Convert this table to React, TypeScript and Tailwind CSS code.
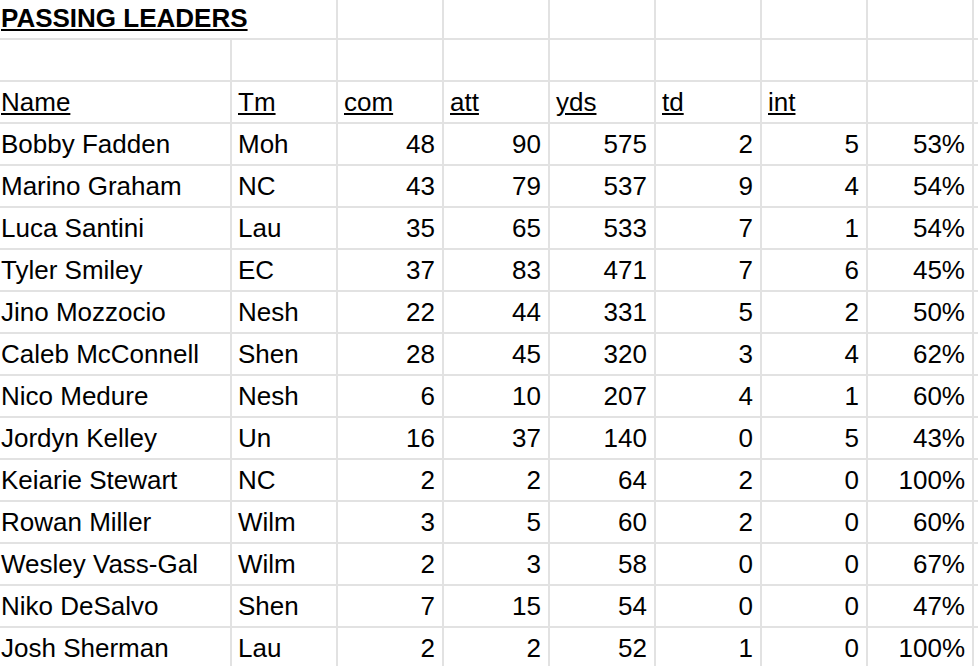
import React from 'react';

type Row = [string, string, number, number, number, number, number, string];

const rows: Row[] = [
  ['Bobby Fadden', 'Moh', 48, 90, 575, 2, 5, '53%'],
  ['Marino Graham', 'NC', 43, 79, 537, 9, 4, '54%'],
  ['Luca Santini', 'Lau', 35, 65, 533, 7, 1, '54%'],
  ['Tyler Smiley', 'EC', 37, 83, 471, 7, 6, '45%'],
  ['Jino Mozzocio', 'Nesh', 22, 44, 331, 5, 2, '50%'],
  ['Caleb McConnell', 'Shen', 28, 45, 320, 3, 4, '62%'],
  ['Nico Medure', 'Nesh', 6, 10, 207, 4, 1, '60%'],
  ['Jordyn Kelley', 'Un', 16, 37, 140, 0, 5, '43%'],
  ['Keiarie Stewart', 'NC', 2, 2, 64, 2, 0, '100%'],
  ['Rowan Miller', 'Wilm', 3, 5, 60, 2, 0, '60%'],
  ['Wesley Vass-Gal', 'Wilm', 2, 3, 58, 0, 0, '67%'],
  ['Niko DeSalvo', 'Shen', 7, 15, 54, 0, 0, '47%'],
  ['Josh Sherman', 'Lau', 2, 2, 52, 1, 0, '100%'],
];

const headers = ['com', 'att', 'yds', 'td', 'int'];

const rowCls = 'grid grid-cols-[232px_repeat(7,106px)_1fr]';
const cell = 'flex items-end pb-0 border-r-2 border-b-2 border-[#e2e2e2] whitespace-nowrap overflow-hidden';
const filler = 'border-b-2 border-[#e2e2e2]';

const App: React.FC = () => {
  return (
    <div className="h-[666px] w-[978px] overflow-hidden bg-white text-black font-['Liberation_Sans',Arial,sans-serif] text-[26px]">
      {/* title row */}
      <div className={`${rowCls} h-[40px]`}>
        <div className={`${cell} col-span-2 pl-[1px] font-bold underline`}>PASSING LEADERS</div>
        <div className={cell} />
        <div className={cell} />
        <div className={cell} />
        <div className={cell} />
        <div className={cell} />
        <div className={cell} />
        <div className={filler} />
      </div>

      {/* blank row */}
      <div className={`${rowCls} h-[42px]`}>
        {Array.from({ length: 8 }).map((_, i) => (
          <div key={i} className={cell} />
        ))}
        <div className={filler} />
      </div>

      {/* header row */}
      <div className={`${rowCls} h-[42px]`}>
        <div className={`${cell} pl-[1px] underline`}>Name</div>
        <div className={`${cell} pl-[6px] underline`}>Tm</div>
        {headers.map((h) => (
          <div key={h} className={`${cell} pl-[6px] underline`}>{h}</div>
        ))}
        <div className={cell} />
        <div className={filler} />
      </div>

      {rows.map((r) => (
        <div key={r[0]} className={`${rowCls} h-[42px]`}>
          <div className={`${cell} pl-[1px]`}>{r[0]}</div>
          <div className={`${cell} pl-[6px]`}>{r[1]}</div>
          {r.slice(2).map((v, i) => (
            <div key={i} className={`${cell} justify-end pr-[7px]`}>{v}</div>
          ))}
          <div className={filler} />
        </div>
      ))}
    </div>
  );
};

export default App;
